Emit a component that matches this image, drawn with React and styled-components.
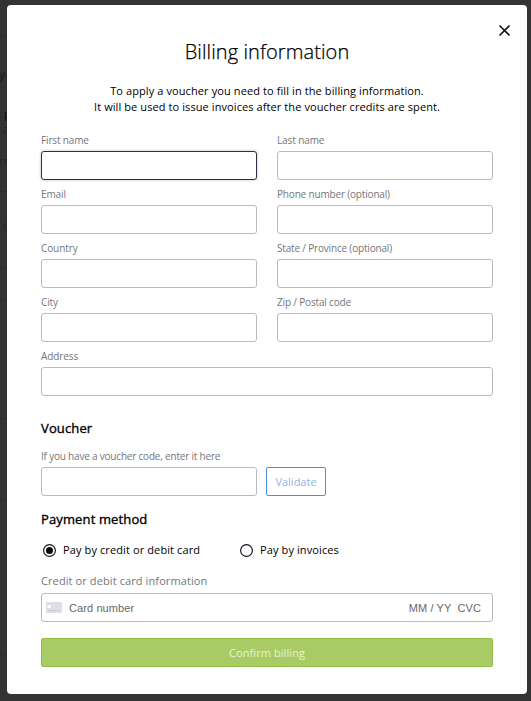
import React from 'react';
import styled, { createGlobalStyle } from 'styled-components';

const GlobalStyle = createGlobalStyle`
  * { box-sizing: border-box; }
  body { margin: 0; background: #333; font-family: "Open Sans", sans-serif; color: #000; }
  button, input { font: inherit; }
`;

const Page = styled.main`
  position: relative;
  width: 531px;
  height: 701px;
  padding: 5px 4px 7px 7px;
  overflow: hidden;
  background: #333;
`;

const Behind = styled.div`
  position: absolute;
  inset: 0 auto 0 0;
  width: 7px;
  overflow: hidden;
`;

const Rule = styled.i`
  position: absolute;
  top: ${(p) => p.$y}px;
  left: 0;
  width: 7px;
  height: 1px;
  background: #2d2d2d;
`;

const Snippet = styled.span`
  position: absolute;
  top: ${(p) => p.$y}px;
  left: ${(p) => p.$x}px;
  font-size: ${(p) => p.$size || 11}px;
  font-weight: ${(p) => (p.$bold ? 600 : 400)};
  line-height: 16px;
  color: ${(p) => p.$color || '#15181c'};
  white-space: nowrap;
`;

const Dialog = styled.section`
  position: relative;
  display: flex;
  flex-direction: column;
  width: 520px;
  height: 689px;
  padding: 33px 34px 27px;
  border-radius: 4px;
  background: #fff;
`;

const Close = styled.button`
  position: absolute;
  top: 19px;
  right: 16px;
  width: 13px;
  height: 13px;
  padding: 0;
  border: 0;
  background: none;
  svg { display: block; }
`;

const Title = styled.h1`
  margin: 0;
  font-size: 20px;
  font-weight: 300;
  line-height: 28px;
  letter-spacing: 0.09px;
  -webkit-text-stroke: 0.25px #000;
  text-align: center;
`;

const Intro = styled.p`
  margin: 17px 0 0;
  font-size: 11px;
  line-height: 16px;
  text-align: center;
`;

const Spaced = styled.span`
  letter-spacing: ${(p) => p.$ls || 0}px;
`;

const Fields = styled.div`
  display: grid;
  grid-template-columns: 216px 216px;
  column-gap: 20px;
  row-gap: 7px;
  margin-top: 18px;
`;

const Field = styled.label`
  display: flex;
  flex-direction: column;
  grid-column: ${(p) => (p.$wide ? '1 / -1' : 'auto')};
`;

const Label = styled.span`
  height: 18px;
  font-size: 10px;
  line-height: 14px;
  letter-spacing: ${(p) => p.$ls}px;
  color: #757579;
  white-space: nowrap;
`;

const Input = styled.input`
  width: 100%;
  height: 29px;
  padding: 0 8px;
  border: 1px solid ${(p) => (p.$active ? '#2d3142' : '#bababa')};
  border-radius: 3px;
  outline: 0;
  background: #fff;
  box-shadow: ${(p) => (p.$active ? '0 0 2px 1px #dedede' : 'none')};
`;

const Heading = styled.h2`
  margin: ${(p) => p.$top}px 0 0;
  font-size: 13px;
  font-weight: 400;
  line-height: 18px;
  letter-spacing: 0.13px;
  -webkit-text-stroke: 0.35px #000;
`;

const VoucherRow = styled.div`
  display: grid;
  grid-template-columns: 216px 60px;
  align-items: end;
  column-gap: 9px;
  margin-top: 12px;
`;

const Validate = styled.button`
  height: 29px;
  padding: 0;
  border: 1px solid #4a90e2;
  border-radius: 2px;
  background: #fff;
  font-size: 11px;
  color: #92b4ea;
`;

const Options = styled.div`
  display: grid;
  grid-template-columns: 197px auto;
  margin: 14px 0 0 2px;
`;

const Option = styled.label`
  display: flex;
  align-items: center;
  gap: 7px;
  height: 16px;
  font-size: 11px;
  line-height: 14px;
  letter-spacing: 0.11px;
  white-space: nowrap;
`;

const Caption = styled.div`
  margin-top: 15px;
  height: 20px;
  font-size: 11px;
  line-height: 16px;
  letter-spacing: 0.1px;
  color: #757579;
`;

const CardBox = styled.div`
  display: flex;
  align-items: center;
  height: 29px;
  padding: 1px 11px 0 4px;
  border: 1px solid #bababa;
  border-radius: 3px;
  font-family: "Liberation Sans", Arial, sans-serif;
  font-size: 11px;
  letter-spacing: 0.1px;
  color: #686868;
  svg { margin: -2px 7px 0 0; }
`;

const CardNumber = styled.span`
  flex: 1;
`;

const Expiry = styled.span`
  margin-right: 6px;
`;

const Confirm = styled.button`
  height: 29px;
  margin-top: 16px;
  padding: 0;
  border: 1px solid #92bd46;
  border-radius: 2px;
  background: #a8cb66;
  font-size: 11px;
  letter-spacing: 0.08px;
  color: #e9f2da;
`;

const fields = [
  ['First name', -0.15], ['Last name', -0.1], ['Email', -0.1], ['Phone number (optional)', -0.17],
  ['Country', -0.1], ['State / Province (optional)', -0.18], ['City', -0.1], ['Zip / Postal code', -0.17],
  ['Address', -0.1],
];

function RadioMark({ checked }) {
  return (
    <svg width="13" height="13" viewBox="0 0 13 13">
      <circle cx="6.5" cy="6.5" r="5.9" fill="#fff" stroke="#151720" strokeWidth="1.2" />
      {checked && <circle cx="6.5" cy="6.5" r="3.5" fill="#07080c" />}
    </svg>
  );
}

function CardIcon() {
  return (
    <svg width="16" height="11" viewBox="0 0 16 11">
      <rect width="16" height="11" rx="1" fill="#dcdfe7" />
      <rect x="1.5" y="3" width="3.5" height="3" rx=".5" fill="#fff" />
      <path d="M2 8.5h12" stroke="#c3c7d3" strokeDasharray="2 1" />
    </svg>
  );
}

export default function App() {
  return (
    <Page>
      <GlobalStyle />
      <Behind aria-hidden="true">
        {[36, 191, 267, 299, 418, 500, 654].map((y) => <Rule key={y} $y={y} />)}
        <Snippet $y={67} $x={-2} $size={14} $bold $color="#20222a">yo</Snippet>
        <Snippet $y={106} $x={-3} $color="#1b2b40">s</Snippet>
        <Snippet $y={106} $x={4} $color="#080808">p</Snippet>
        <Snippet $y={121} $x={3} $color="#1b2637">a</Snippet>
        <Snippet $y={153} $x={-1} $color="#1b2637">rn</Snippet>
        <Snippet $y={219} $x={3} $color="#222428">C</Snippet>
      </Behind>
      <Dialog>
        <Close aria-label="Close">
          <svg width="13" height="13" viewBox="0 0 13 13">
            <path d="M1.5 1.5l10 10M11.5 1.5l-10 10" stroke="#111" strokeWidth="1.6" />
          </svg>
        </Close>
        <Title>Billing information</Title>
        <Intro>
          <Spaced $ls={0.1}>To apply a voucher you need to fill in the billing information.</Spaced><br />
          <Spaced $ls={0.09}>It will be used to issue invoices after the voucher credits are spent.</Spaced>
        </Intro>
        <Fields>
          {fields.map(([name, ls], i) => (
            <Field key={name} $wide={name === 'Address'}>
              <Label $ls={ls}>{name}</Label>
              <Input $active={i === 0} />
            </Field>
          ))}
        </Fields>
        <Heading $top={23}>Voucher</Heading>
        <VoucherRow>
          <Field>
            <Label $ls={-0.2}>If you have a voucher code, enter it here</Label>
            <Input />
          </Field>
          <Validate>Validate</Validate>
        </VoucherRow>
        <Heading $top={14}>Payment method</Heading>
        <Options>
          <Option><RadioMark checked />Pay by credit or debit card</Option>
          <Option><RadioMark />Pay by invoices</Option>
        </Options>
        <Caption>Credit or debit card information</Caption>
        <CardBox>
          <CardIcon />
          <CardNumber>Card number</CardNumber>
          <Expiry>MM / YY</Expiry>
          <span>CVC</span>
        </CardBox>
        <Confirm>Confirm billing</Confirm>
      </Dialog>
    </Page>
  );
}
